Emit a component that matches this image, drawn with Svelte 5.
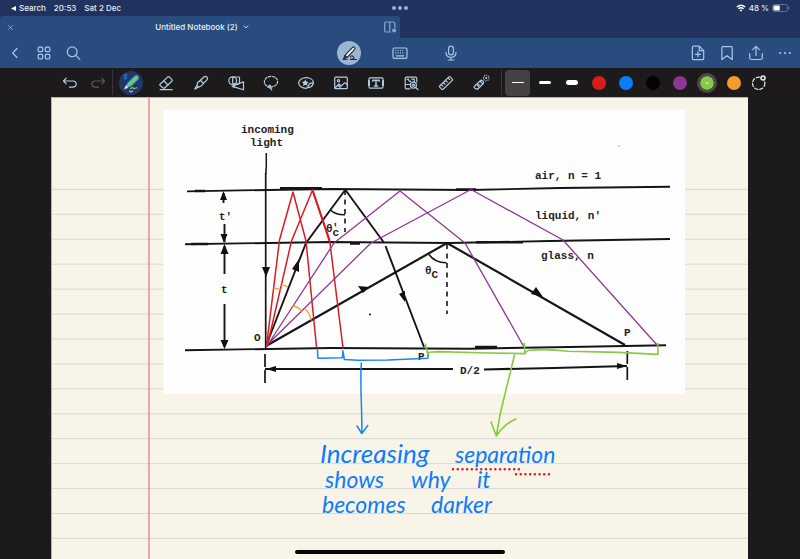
<script>
  let tool = $state("pen");
  let mode = $state("write");
  let thickness = $state("thin");
  let color = $state("#87c940");

  const tools = ["pen", "eraser", "highlighter", "shapes", "lasso", "sticker", "image", "text", "elements", "ruler", "laser"];
  const modes = ["write", "keyboard", "microphone"];
  const sizes = ["thin", "medium", "thick"];
  const colors = [
    { name: "Red", value: "#d81c1c" },
    { name: "Blue", value: "#0c7cfc" },
    { name: "Black", value: "#040404" },
    { name: "Purple", value: "#8c3694" },
    { name: "Green", value: "#87c940" },
    { name: "Orange", value: "#f49c2c" },
  ];

  // Ruled lines of the paper
  const rules = Array.from({ length: 15 }, (_, i) => 189.4 + i * 24.93);
</script>

{#snippet icon(name)}
  <svg class="icon" viewBox="0 0 20 20" aria-hidden="true">
    {#if name === "back"}
      <path d="M12 5.5 7.7 10l4.3 4.5" />
    {:else if name === "grid"}
      <rect x="4.2" y="4.2" width="4.5" height="4.5" rx="1" />
      <rect x="11.3" y="4.2" width="4.5" height="4.5" rx="1" />
      <rect x="4.2" y="11.3" width="4.5" height="4.5" rx="1" />
      <rect x="11.3" y="11.3" width="4.5" height="4.5" rx="1" />
    {:else if name === "search"}
      <circle cx="9.2" cy="8.8" r="4.9" /><path d="m12.8 12.4 4 4" />
    {:else if name === "write"}
      <path class="white" d="M6.2 12.2 13.6 4.3q1-.8 2 .1.8 1 0 2L8.2 14.3l-3.3 1.2z" />
      <path d="m5 15.5 1-3 2.2 1.8zM4 16.5h4M11.5 16.5h6M11.5 14q1-2.5 3 0M12 16q2 1 3-1.5" />
    {:else if name === "keyboard"}
      <rect x="3" y="5" width="14" height="10.4" rx="1.4" />
      <path stroke-dasharray=".1 2.2" d="M5.8 7.6h9M5.8 9.9h9" /><path d="M6.2 12.8h7.5" />
    {:else if name === "microphone"}
      <rect x="7.6" y="3.2" width="4.8" height="8.6" rx="2.4" />
      <path d="M5 9.3q0 5 5 5t5-5M10 14.3v2.5M7.2 17h5.6" />
    {:else if name === "newpage"}
      <path d="M5.7 3.2h5.6l4.4 4.4v7.8q0 1.3-1.3 1.3H5.7q-1.3 0-1.3-1.3V4.5q0-1.3 1.3-1.3zM11.3 3.4v4.2h4M10 8.8v5M7.5 11.3h5" />
    {:else if name === "bookmark"}
      <path d="M5.9 3.6h8.3q1 0 1 1v12L10 12.7l-5.1 3.9v-12q0-1 1-1z" />
    {:else if name === "share"}
      <path d="M10 12.5V3.7M6.7 6.7 10 3.4l3.3 3.3M3.7 10.5v4.3q0 1.7 1.7 1.7h9.2q1.7 0 1.7-1.7v-4.3" />
    {:else if name === "more"}
      <circle class="solid" cx="5.2" cy="10" r="1.1" /><circle class="solid" cx="10" cy="10" r="1.1" /><circle class="solid" cx="14.8" cy="10" r="1.1" />
    {:else if name === "undo"}
      <path d="M6.2 5.2 3.5 8l2.7 2.8M3.7 8h9q3.5 0 3.5 3.1t-3.5 3.1H9.5" />
    {:else if name === "redo"}
      <path d="M13.8 5.2 16.5 8l-2.7 2.8M16.3 8h-9q-3.5 0-3.5 3.1t3.5 3.1h3.2" />
    {:else if name === "pen"}
      <path d="M4.5 14.2 7 10l6.8-6.6q2-1.4 3 0t.2 2.6L9.8 13z" fill="#87c940" stroke="#31a4ea" />
      <path d="m3.6 15.8 1.4-3 1.9 1.5z" fill="#fff" stroke="#d5e8f5" stroke-width=".6" />
      <path d="M9.5 15.6q2.6-1.6 2.8-.5t3.5-.3" stroke="#87c940" />
      <path d="M6 2.1q-2-.9-2.8.1t.9 1.2 1.5 1.6-2.8.4" stroke="#2777bd" />
      <path d="m8.5 18 1.5 1 1.5-1" stroke="#9fbfe0" />
    {:else if name === "eraser"}
      <path d="m4.2 11 7.4-6.9q1-.9 2 0l2.2 2.2q1 1 0 2l-6.9 6.4q-1 .9-2 0l-2.7-2.2q-.8-.8 0-1.5zM7.7 7.8l4.5 4.4M4.2 16.7h12" />
    {:else if name === "highlighter"}
      <path d="m6.6 9.8 6.6-6q1.4-1 2.7.2t.2 2.7l-6.3 6.6-2.2.8-1.7-1.8zM6 12.2l-2 3.8 3.7-2.1M9.6 7.5l2.8 2.7" />
      <path class="solid" d="m3.2 16.5 1.2-2.7 1.9 1.8z" />
    {:else if name === "shapes"}
      <circle cx="6.7" cy="7.8" r="3.9" /><rect x="6.7" y="4" width="6.8" height="6.8" rx=".7" />
      <path d="m6.2 13.4 11.3-4.6v8zM8 11.6v3" />
    {:else if name === "lasso"}
      <path stroke-dasharray="2.4 1.5" d="M9.8 13.8c-3.8 0-6.4-1.9-6.4-4.8s2.7-5.6 6.6-5.6 6.6 2.2 6.6 5.1-2.6 5.3-6.8 5.3z" />
      <path d="M8 12.4q1.8-.2 2 1.5t-1 1.1q-1-.8-2.2-.8M9.4 15.7q1.6-.2 1.2 1.3" />
    {:else if name === "sticker"}
      <path d="M10.2 15.3C6 15.3 2.7 13 2.7 9.9S6 4.7 10.2 4.7s7.2 2.1 7.2 5.1q-4.2-.2-4.7 2.6-.4 2.4-2.5 2.9zM12.7 14.7q4-1 4.7-4.8" />
      <path class="solid" d="m9.3 6.4 1.1 2.2 2.4.3-1.8 1.6.5 2.4-2.2-1.2-2.2 1.2.4-2.4-1.6-1.6 2.3-.3z" />
    {:else if name === "image"}
      <rect x="3.7" y="4.2" width="12.6" height="11.5" rx="1" />
      <circle cx="7.5" cy="7.7" r="1.1" /><path d="m4 15 4-4 2.2 2 3.7-3.4 2.3 2.2M9.2 14.5l-1.8-2" />
    {:else if name === "text"}
      <path d="M3 8V5.9q0-1 1-1h12q1 0 1 1V8M3 12v2.1q0 1 1 1h12q1 0 1-1V12" />
      <path d="M3 8v4M17 8v4" stroke-width="2" />
      <path stroke-width="1.5" d="M6.9 8.3V7.2h6.2v1.1M10 7.4v5.5M8.5 12.9h3" />
    {:else if name === "elements"}
      <path d="M15.8 9V5.5q0-1.3-1.3-1.3h-9q-1.3 0-1.3 1.3v9q0 1.3 1.3 1.3H9M4.2 11.5h4.7M6 6.5q1.5-1 1.8.7t1.8.9M10.7 6.2h2.6v2.6" />
      <circle cx="12.4" cy="12.2" r="3" /><circle cx="12.4" cy="12.2" r="1" /><path d="m14.6 14.5 2.3 2" />
    {:else if name === "ruler"}
      <path d="m3.7 13 9.2-9.1q.6-.5 1.2 0l2.2 2.2q.6.6 0 1.2l-9.2 9q-.6.6-1.2 0l-2.2-2.2q-.5-.5 0-1.1zM12 5l1.7 1.6M9.7 7.3 11.2 9M7.4 9.5 9 11.2M5.3 11.7l1.5 1.5" />
    {:else if name === "laser"}
      <path d="m4 12.7 5.3-5q1-.9 2 0l1 1q.8.8 0 1.8l-5 5q-1.3 1.3-3 .1-2.3-1.5-.3-2.9zM9 8.2l2.8 2.8" /><circle cx="7.4" cy="12.3" r=".8" />
      <circle cx="15.2" cy="5" r="2.8" stroke-dasharray=".2 2" /><circle class="solid" cx="15.2" cy="5" r="1.1" />
    {:else if name === "custom"}
      <circle cx="9.7" cy="10.3" r="6.2" stroke-dasharray="3.2 2" /><circle class="solid" cx="14" cy="5" r="2.8" />
      <circle cx="14" cy="5" r=".6" fill="#333" stroke="#333" />
    {:else if name === "split"}
      <path d="M10 15H6.3q-1.6 0-1.6-1.6V6.6Q4.7 5 6.3 5h7q1.6 0 1.6 1.6v4M9.8 5v10" /><circle class="solid" cx="14.1" cy="13.5" r="2" />
    {/if}
  </svg>
{/snippet}

<div class="app">
  <header>
    <div class="status">
      <div class="status-left">
        <a href="#search"><svg width="5" height="5" viewBox="0 0 5 5" aria-hidden="true"><path d="M5 0v5L0 2.5z" fill="#fff" /></svg>Search</a>
        <span>20:53</span>
        <span>Sat 2 Dec</span>
      </div>
      <button class="multitask" aria-label="Multitasking"><i></i><i></i><i></i></button>
      <div class="status-right">
        <svg width="10" height="8" viewBox="0 0 10 8" aria-hidden="true">
          <path d="M.8 3q4.2-3.6 8.4 0M2.4 4.8q2.6-2.2 5.2 0" fill="none" stroke="#fff" stroke-width="1.4" /><path d="M3.6 6.1q1.4-1 2.8 0L5 7.7z" fill="#fff" />
        </svg>
        <span>48 %</span>
        <svg width="18" height="8" viewBox="0 0 18 8" aria-hidden="true">
          <rect x=".5" y=".5" width="15" height="7" rx="2" fill="none" stroke="#60739a" /><rect x="1.5" y="1.5" width="6.3" height="5" rx="1" fill="#fff" /><path d="M17 2.6v2.8" stroke="#60739a" />
        </svg>
      </div>
    </div>

    <div class="tabs">
      <div class="tab">
        <button class="close" aria-label="Close tab"><svg width="5" height="5" viewBox="0 0 5 5"><path d="m.3.3 4.4 4.4m0-4.4L.3 4.7" stroke="#9fbad9" stroke-width=".8" /></svg></button>
        <button class="title">Untitled Notebook (2)<svg width="6" height="4" viewBox="0 0 6 4"><path d="m.7.7 2.3 2.2L5.3.7" fill="none" stroke="#c4d6ec" /></svg></button>
        <button class="split" aria-label="Split view">{@render icon("split")}</button>
      </div>
    </div>

    <nav class="bar">
      <div class="group">
        <button aria-label="Back">{@render icon("back")}</button>
        <button aria-label="Thumbnails">{@render icon("grid")}</button>
        <button aria-label="Search">{@render icon("search")}</button>
      </div>
      <div class="group modes">
        {#each modes as name}
          <button class:active={mode === name} aria-label={name} onclick={() => (mode = name)}>{@render icon(name)}</button>
        {/each}
      </div>
      <div class="group end">
        <button aria-label="Add page">{@render icon("newpage")}</button>
        <button aria-label="Bookmark">{@render icon("bookmark")}</button>
        <button aria-label="Share">{@render icon("share")}</button>
        <button aria-label="More">{@render icon("more")}</button>
      </div>
    </nav>
  </header>

  <div class="toolbar">
    <div class="history">
      <button aria-label="Undo">{@render icon("undo")}</button>
      <button class="dim" aria-label="Redo">{@render icon("redo")}</button>
    </div>
    <div class="tools">
      {#each tools as name}
        <button class:active={tool === name} aria-label={name} onclick={() => (tool = name)}>{@render icon(name)}</button>
      {/each}
    </div>
    <div class="swatches">
      {#each sizes as size}
        <label class="size {size}" class:active={thickness === size}>
          <input type="radio" name="thickness" value={size} aria-label={size} bind:group={thickness} />
        </label>
      {/each}
      {#each colors as c}
        <label class="color" class:active={color === c.value}>
          <input type="radio" name="color" value={c.value} aria-label={c.name} bind:group={color} style="background-color: {c.value}" />
        </label>
      {/each}
      <button class="custom" aria-label="Custom colour">{@render icon("custom")}</button>
    </div>
  </div>

  <main>
    <svg class="paper" viewBox="51 97 697 462">
      <rect x="51" y="97" width="697" height="462" fill="#f8f5e8" />
      {#each rules as y}
        <path d="M51 {y}h697" stroke="#d6d8dc" />
      {/each}
      <path d="M149 97v462" stroke="#df7f85" stroke-width="1.3" />
      <path d="M51.5 559V97.5H748" fill="none" stroke="#b4b3ac" />

      <!-- Pasted figure -->
      <rect x="163.5" y="109.7" width="521.5" height="284" fill="#fefefe" />
      <g class="ink">
        <path d="M187 191.4 240 190.4 330 189 470 190 560 188 670 186.7" />
        <path d="M185 244.3 240 243.4 330 242 450 243 550 241 670 239" />
        <path d="M185 350.3 240 349.4 330 348 470 348.7 570 347 666 345.3" />
        <path d="M195 191h10M280 188.3h42M456 189.5h20M191 244h17M350 243.4h10M476 242.3h47M475 347h22" stroke-width="2.6" />
        <path d="M266.3 153v15M266 168v6" stroke-width="1.5" />
        <path d="M265.7 173v175" stroke-width="1.7" />
        <path d="M223.5 193v10M224.5 224v18M224.5 246v28M224.5 304v43" />
        <path d="m266 346 40-103 39.5-53.5M345.5 190l38 52M385.5 246 424 347" />
        <path d="m266 346 181-103L625 345" stroke-width="2.2" />
        <path d="M345 190v42M447 244v70" stroke-dasharray="5 4.5" stroke-width="1.6" />
        <path d="M330.5 210q5 5 14.5 4.7M429 254.5q6 8.5 17.5 8.3" stroke-width="1.6" />
        <path d="M265 354v29M627.3 351v29" stroke-dasharray="13 3" stroke-width="1.7" />
        <path d="M265 369h188M484 369.5l70-1.5 73-2" stroke-width="2.2" />
      </g>
      <g fill="#111">
        <path d="m223.5 191 3.5 9h-7zM224 243l-3.5-9h7zM224.5 244l4 10h-8zM224.5 349l-4-9h8zM266 277l-4-10h8zM299 259l-7 10 7 3zM405 302l-6-8 6-3zM369 287l-11-1 5 7zM543 297l-7-10-5 7zM266 369l10-3v6zM627 366l-10-3v6z" />
        <circle cx="619" cy="146" r=".8" fill="#999" /><circle cx="370" cy="314.5" r="1" />
      </g>
      <g class="caption">
        <text x="241" y="133">incoming</text>
        <text x="250" y="146">light</text>
        <text x="535" y="179">air, n = 1</text>
        <text x="535" y="219">liquid, n'</text>
        <text x="541" y="259">glass, n</text>
        <text x="219" y="220">t'</text>
        <text x="221" y="293">t</text>
        <text x="326" y="232">θ<tspan dy="4">c</tspan><tspan x="332" dy="-5">'</tspan></text>
        <text x="425" y="274">θ<tspan dy="4">C</tspan></text>
        <text x="254" y="341">O</text>
        <text x="418" y="360">P'</text>
        <text x="624" y="336">P</text>
        <text x="460" y="374">D/2</text>
      </g>

      <!-- Pen strokes -->
      <g class="stroke">
        <g stroke="#d81c24" stroke-width="1.5">
          <path d="m266.5 346 13-106 13.5-48 13 49 10.5 106M267.5 345l24-104L312.5 190l17.5 53 13 105" />
          <path d="m312.5 190 17 50" stroke-width="2" />
        </g>
        <path stroke="#8c3694" stroke-width="1.3" d="m267 346 67-103 66-52 65 52 59 104M267 345l104-102L471 189.5 563 240l94 105" />
        <path stroke="#f49c2c" stroke-width="1.3" d="M274 289q3-1 6 .5M281 285.3q4-.5 6.5 2M293 306q5 .5 9 5.5M305 309q5 4 6 11" />
        <path stroke="#1686f5" stroke-width="1.5" d="m317.4 350 .5 8.3 24.5-.5.5-7 1.5 8.7 13 .8 30.5-.4 40-1.7.3-5M361.3 363c-1.5 23 1 48 .5 70M357 426l4.8 7.5 6-8" />
        <path stroke="#87c940" stroke-width="1.6" d="m425.3 344 2.5 10.5 1-2.2 10-.7 40 1.2 46 .8-.3-10M525 354l-.8-10.5M525 353l3-2.5q17-2 40 .7l50 1.2 40 2-.3-11M514.5 355l-10.5 43-4 17-3.7 21M491 422l5.3 14q9-13 19.7-17" />
      </g>
      <g class="note">
        <text x="320" y="463">Increasing</text>
        <text class="tight" x="455" y="463">separation</text>
        <text class="tight" x="325" y="488">shows <tspan x="411">why</tspan> <tspan x="477">it</tspan></text>
        <text class="tight" x="322" y="513">becomes <tspan x="431">darker</tspan></text>
      </g>
      <path d="M453 469.3h66M516 474.3h36" stroke="#d81c24" stroke-width="2.4" stroke-linecap="round" stroke-dasharray=".1 4.6" />
    </svg>
    <div class="home"></div>
  </main>
</div>

<style>
  :global(body) {
    margin: 0;
    background: #1c1a1c;
  }

  .app {
    font-family: Inter, "Liberation Sans", sans-serif;
    font-size: 8px;
    line-height: 16px;
    color: #e8eef8;
  }

  header {
    background: #21325f;
  }

  button {
    display: flex;
    align-items: center;
    justify-content: center;
    padding: 0;
    border: 0;
    background: none;
    color: inherit;
    font: inherit;
  }

  .icon {
    width: 20px;
    height: 20px;
    fill: none;
    stroke: currentColor;
    stroke-width: 1.2;
    stroke-linecap: round;
    stroke-linejoin: round;
  }

  .icon .solid {
    fill: currentColor;
    stroke: none;
  }

  .status {
    display: grid;
    grid-template-columns: 1fr auto 1fr;
    height: 16px;
    font-weight: 500;
  }

  .status-left,
  .status-right {
    display: flex;
    align-items: center;
  }

  .status-left {
    gap: 8px;
    padding-left: 11px;
  }

  .status-left a {
    display: flex;
    align-items: center;
    gap: 3px;
    color: inherit;
    text-decoration: none;
  }

  .status-right {
    justify-content: flex-end;
    gap: 3px;
    padding-right: 10px;
  }

  .multitask {
    gap: 2px;
  }

  .multitask i {
    width: 4px;
    height: 4px;
    border-radius: 50%;
    background: #9dadd0;
  }

  .tabs {
    height: 22px;
  }

  .tab {
    display: grid;
    grid-template-columns: 24px 1fr 20px;
    align-items: center;
    width: 50%;
    height: 22px;
    border-radius: 3px 3px 0 0;
    background: #284c7d;
  }

  .close {
    justify-content: flex-start;
    padding-left: 8px;
  }

  .title {
    gap: 5px;
    font-weight: 500;
  }

  .split {
    color: #8ba5c8;
  }

  .bar {
    display: grid;
    grid-template-columns: 1fr auto 1fr;
    height: 30px;
    background: #284c7d;
    color: #a9c6e8;
  }

  .group {
    display: flex;
    align-items: center;
  }

  .group button {
    width: 29px;
    height: 30px;
  }

  .end {
    justify-content: flex-end;
    padding-right: 1px;
  }

  .modes {
    gap: 27px;
  }

  .modes button {
    width: 24px;
    height: 24px;
    border-radius: 50%;
  }

  .modes .active {
    background: #9bb5d5;
    color: #222c3c;
  }

  .white {
    fill: #fff;
  }

  .toolbar {
    display: flex;
    align-items: center;
    justify-content: center;
    height: 29px;
    padding-left: 27px;
    background: #1c1a1b;
    color: #b4cbe4;
  }

  .history,
  .tools,
  .swatches {
    display: flex;
    align-items: center;
  }

  .history button {
    width: 28px;
    height: 28px;
  }

  .history .dim {
    color: #56595e;
  }

  .tools {
    margin-right: 2px;
    padding-right: 3px;
    border: solid #38363a;
    border-width: 0 1px;
  }

  .tools button {
    width: 35px;
    height: 25px;
  }

  .tools .active {
    width: 24px;
    height: 24px;
    margin: 0 5px 0 6px;
    border-radius: 50%;
    background: #21376a;
  }

  .size,
  .color {
    display: flex;
    align-items: center;
    justify-content: center;
    width: 27px;
    height: 27px;
  }

  .size {
    width: 25px;
    height: 26px;
    margin: 0 1px;
    border-radius: 4px;
  }

  .size.active {
    background: #444245;
  }

  input {
    appearance: none;
    margin: 0;
  }

  .size input {
    width: 12px;
    height: 1px;
    border-radius: 3px;
    background: #fff;
  }

  .medium input {
    height: 3px;
  }

  .thick input {
    height: 5px;
  }

  .color input {
    width: 14px;
    height: 14px;
    border-radius: 50%;
  }

  .color.active input {
    outline: 3px solid #4b4a4c;
    background: url("data:image/svg+xml,%3Csvg xmlns='http://www.w3.org/2000/svg' viewBox='0 0 14 14'%3E%3Cpath d='m5.5 6.5 1.5 1.4 1.5-1.4' fill='none' stroke='white'/%3E%3C/svg%3E");
  }

  .custom {
    width: 24px;
    color: #e4e4e4;
  }

  main {
    position: relative;
    padding: 0 52px 0 51px;
  }

  .paper {
    display: block;
    width: 100%;
  }

  .ink {
    fill: none;
    stroke: #151515;
    stroke-width: 1.9;
  }

  .caption {
    font-family: "Liberation Mono", monospace;
    font-size: 11px;
    font-weight: 700;
    fill: #222;
  }

  .stroke {
    fill: none;
    stroke-linecap: round;
    stroke-linejoin: round;
  }

  .note {
    font-family: Lato, "Liberation Sans", sans-serif;
    font-size: 26px;
    font-weight: 400;
    font-style: italic;
    fill: #0c7cfc;
  }

  .tight {
    font-size: 23px;
  }

  .home {
    position: absolute;
    bottom: 5px;
    left: 50%;
    width: 210px;
    height: 4px;
    margin-left: -105px;
    border-radius: 2px;
    background: #050505;
  }
</style>
